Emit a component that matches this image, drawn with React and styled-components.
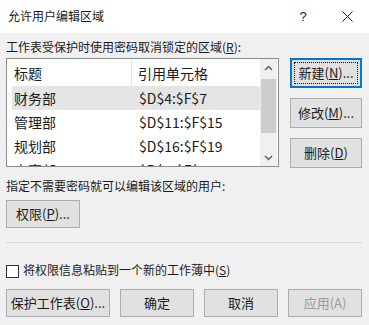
import React from 'react';
import styled, { createGlobalStyle } from 'styled-components';

const GlobalStyle = createGlobalStyle`
  html, body { margin: 0; padding: 0; background: #f0f0f0; }
  * { box-sizing: border-box; }
`;

const font = `"Noto Sans CJK SC", "Noto Sans", "Liberation Sans", sans-serif`;

const Dialog = styled.div`
  width: 369px;
  height: 325px;
  background: #f0f0f0;
  font-family: ${font};
  color: #1a1a1a;
  overflow: hidden;
`;

const TitleBar = styled.div`
  height: 33px;
  background: #fff;
  display: flex;
  align-items: center;
  padding-left: 8px;
  font-size: 12px;
  line-height: 16px;
`;

const Title = styled.div`
  flex: 1;
  margin-top: -2px;
`;

const TitleIcon = styled.div`
  width: 44px;
  height: 33px;
  display: flex;
  align-items: center;
  justify-content: center;
  font-family: "Liberation Sans", sans-serif;
  font-size: 13px;
  color: #222;
`;

const Body = styled.div`
  padding: 6px 7px 0 6px;
`;

const Label = styled.div`
  font-size: 12px;
  line-height: 16px;
  margin-top: ${p => p.$mt || 0}px;
`;

const U = styled.span`
  text-decoration: underline;
`;

const TopRow = styled.div`
  display: flex;
  margin-top: 3px;
`;

const ListBox = styled.div`
  width: 273px;
  height: 109px;
  border: 1px solid #8c8c8c;
  background: #fff;
  display: flex;
  overflow: hidden;
`;

const ListInner = styled.div`
  flex: 1;
  overflow: hidden;
`;

const ListRow = styled.div`
  display: flex;
  height: ${p => (p.$head ? 27 : 24)}px;
  align-items: center;
  margin: 0 0 0 5px;
  background: ${p => (p.$sel ? '#e5e5e5' : 'transparent')};
  font-size: 14px;
  line-height: 18px;
`;

const Cell = styled.div`
  width: ${p => p.$w}px;
  padding-left: ${p => p.$pl}px;
  height: 100%;
  display: flex;
  align-items: center;
  white-space: nowrap;
  border-right: ${p => (p.$div ? '1px solid #e5e5e5' : 'none')};
`;

const Scrollbar = styled.div`
  width: 17px;
  background: #f0f0f0;
  display: flex;
  flex-direction: column;
  align-items: center;
  margin-right: 1px;
`;

const Arrow = styled.div`
  height: 17px;
  width: 17px;
  display: flex;
  align-items: center;
  justify-content: center;
`;

const Thumb = styled.div`
  width: 15px;
  height: 54px;
  background: #cdcdcd;
  margin-top: 3px;
`;

const Spacer = styled.div`
  flex: 1;
`;

const SideButtons = styled.div`
  margin-left: auto;
  display: flex;
  flex-direction: column;
  gap: 10px;
`;

const Button = styled.div`
  width: ${p => p.$w || 72}px;
  height: ${p => p.$h || 28}px;
  background: #e1e1e1;
  border: ${p => (p.$default ? '2px solid #0078d7' : '1px solid #adadad')};
  display: flex;
  align-items: center;
  justify-content: center;
  font-size: 13px;
  line-height: 16px;
  color: ${p => (p.$disabled ? '#9a9a9a' : '#1a1a1a')};
  position: relative;
  padding-bottom: 1px;
`;

const Focus = styled.div`
  position: absolute;
  inset: 2px;
  border: 1px dotted #111;
`;

const Separator = styled.div`
  height: 1px;
  background: #d9d9d9;
  margin-top: 14px;
`;

const CheckRow = styled.div`
  display: flex;
  align-items: center;
  gap: 4px;
  margin-top: 19px;
  font-size: 12px;
  line-height: 16px;
`;

const Box = styled.div`
  width: 13px;
  height: 13px;
  border: 1px solid #333;
  background: #fff;
  margin-top: 3px;
`;

const BottomRow = styled.div`
  display: flex;
  gap: 10px;
  margin-top: 11px;
`;

const Chevron = ({ up }) => (
  <svg width="9" height="6" viewBox="0 0 9 6">
    <path
      d={up ? 'M1 5 L4.5 1.5 L8 5' : 'M1 1 L4.5 4.5 L8 1'}
      fill="none"
      stroke="#606060"
      strokeWidth="1.5"
    />
  </svg>
);

const rows = [
  ['财务部', '$D$4:$F$7'],
  ['管理部', '$D$11:$F$15'],
  ['规划部', '$D$16:$F$19'],
  ['人事部', '$D$2:$F$10'],
];

const App = () => (
  <Dialog>
    <GlobalStyle />
    <TitleBar>
      <Title>允许用户编辑区域</Title>
      <TitleIcon>?</TitleIcon>
      <TitleIcon>
        <svg width="11" height="11" viewBox="0 0 11 11">
          <path d="M0.5 0.5 L10.5 10.5 M10.5 0.5 L0.5 10.5" stroke="#222" strokeWidth="1" />
        </svg>
      </TitleIcon>
    </TitleBar>
    <Body>
      <Label>工作表受保护时使用密码取消锁定的区域(<U>R</U>):</Label>
      <TopRow>
        <ListBox>
          <ListInner>
            <ListRow $head>
              <Cell $w={122} $pl={2} $div>标题</Cell>
              <Cell $w={130} $pl={6}>引用单元格</Cell>
            </ListRow>
            {rows.map((r, i) => (
              <ListRow key={r[0]} $sel={i === 0}>
                <Cell $w={122} $pl={2}>{r[0]}</Cell>
                <Cell $w={130} $pl={7}>{r[1]}</Cell>
              </ListRow>
            ))}
          </ListInner>
          <Scrollbar>
            <Arrow><Chevron up /></Arrow>
            <Thumb />
            <Spacer />
            <Arrow><Chevron /></Arrow>
          </Scrollbar>
        </ListBox>
        <SideButtons>
          <Button $default $h={30}>
            <Focus />
            新建(<U>N</U>)...
          </Button>
          <Button $h={30}>修改(<U>M</U>)...</Button>
          <Button $h={30}>删除(<U>D</U>)</Button>
        </SideButtons>
      </TopRow>
      <Label $mt={10}>指定不需要密码就可以编辑该区域的用户:</Label>
      <div style={{ marginTop: 6 }}>
        <Button $w={74}>权限(<U>P</U>)...</Button>
      </div>
      <Separator />
      <CheckRow>
        <Box />
        <span>将权限信息粘贴到一个新的工作薄中(<U>S</U>)</span>
      </CheckRow>
      <BottomRow>
        <Button $w={104}>保护工作表(<U>O</U>)...</Button>
        <Button $w={74}>确定</Button>
        <Button $w={74}>取消</Button>
        <Button $w={74} $disabled>应用(A)</Button>
      </BottomRow>
    </Body>
  </Dialog>
);

export default App;
